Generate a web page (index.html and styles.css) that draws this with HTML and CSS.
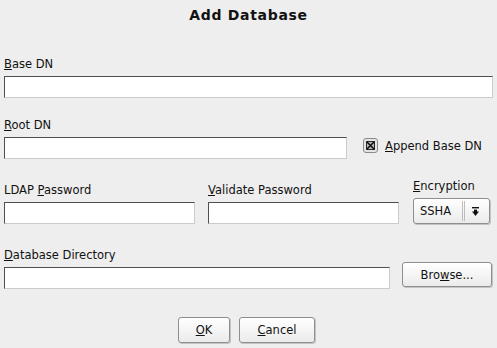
FILE: index.html
```html
<!DOCTYPE html>
<html lang="en">
<head>
    <meta charset="UTF-8">
    <title>Add Database</title>
    <link rel="stylesheet" href="styles.css">
</head>
<body>
<div class="dialog">
    <h1 class="title">Add Database</h1>

    <div class="row">
        <div class="field grow">
            <label><u>B</u>ase DN</label>
            <div class="entry"></div>
        </div>
    </div>

    <div class="row row-root">
        <div class="field root">
            <label><u>R</u>oot DN</label>
            <div class="entry"></div>
        </div>
        <div class="check">
            <svg class="box" width="15" height="15" viewBox="0 0 15 15">
                <rect x="0.5" y="0.5" width="14" height="14" rx="2.5" fill="#e4e4e4" stroke="#8a8a8a"/>
                <rect x="3.5" y="3.5" width="8" height="8" fill="#b8b8b8" stroke="#2a2a2a"/>
                <path d="M4 4 L11 11 M11 4 L4 11" stroke="#111" stroke-width="1.6"/>
            </svg>
            <span><u>A</u>ppend Base DN</span>
        </div>
    </div>

    <div class="row row-pass">
        <div class="field pass">
            <label>LDAP <u>P</u>assword</label>
            <div class="entry"></div>
        </div>
        <div class="field pass">
            <label><u>V</u>alidate Password</label>
            <div class="entry"></div>
        </div>
        <div class="field enc">
            <label><u>E</u>ncryption</label>
            <div class="btn combo">
                <span class="combo-text">SSHA</span>
                <span class="sep"></span>
                <svg class="arrow" width="7" height="9" viewBox="0 0 7 9">
                    <rect x="0" y="0" width="7" height="1.4" fill="#111"/>
                    <rect x="2" y="2.6" width="3" height="2.6" fill="#111"/>
                    <path d="M0 4.6 L7 4.6 L3.5 9 Z" fill="#111"/>
                </svg>
            </div>
        </div>
    </div>

    <div class="row row-dir">
        <div class="field dir">
            <label><u>D</u>atabase Directory</label>
            <div class="entry"></div>
        </div>
        <div class="btn browse">Bro<u>w</u>se...</div>
    </div>

    <div class="actions">
        <div class="btn ok"><u>O</u>K</div>
        <div class="btn cancel"><u>C</u>ancel</div>
    </div>
</div>
</body>
</html>
```
FILE: styles.css
```css
html, body {
    margin: 0;
    padding: 0;
    height: 100%;
}

body {
    background: #eeeeee;
    color: #111;
    font-family: "DejaVu Sans", sans-serif;
    font-size: 11.5px;
}

.dialog {
    padding: 0 4px;
}

.title {
    margin: 0;
    padding-top: 7px;
    height: 17px;
    line-height: 17px;
    text-align: center;
    font-size: 14px;
    font-weight: bold;
    letter-spacing: 0.7px;
}

.row {
    display: flex;
    align-items: flex-end;
    margin-top: 33px;
}

.field {
    display: flex;
    flex-direction: column;
}

.field label {
    line-height: 14px;
    height: 14px;
    margin-bottom: 5px;
}

.grow {
    flex: 1;
}

.entry {
    height: 20px;
    background: #fff;
    border-top: 1px solid #4f4f4f;
    border-left: 1px solid #4f4f4f;
    border-right: 1px solid #cbcbcb;
    border-bottom: 1px solid #cbcbcb;
}

.row-root {
    margin-top: 20px;
}

.root {
    width: 343px;
}

.check {
    display: flex;
    align-items: center;
    margin-left: 16px;
    margin-bottom: 6px;
}

.check .box {
    margin-right: 7px;
}

.row-pass {
    margin-top: 20px;
}

.pass {
    width: 191px;
    margin-right: 13px;
}

.pass + .pass {
    margin-right: 14px;
}

.btn {
    box-sizing: border-box;
    border: 1px solid #8e8e8e;
    border-radius: 3px;
    background: linear-gradient(#ffffff, #ebebeb);
    box-shadow: 1px 1px 0 #c4c4c4;
    display: flex;
    align-items: center;
    justify-content: center;
}

.combo {
    width: 77px;
    height: 26px;
    justify-content: flex-start;
    padding-left: 6px;
}

.combo-text {
    width: 42px;
}

.sep {
    width: 1px;
    height: 20px;
    border-left: 1px solid #bdbdbd;
    border-right: 1px solid #bdbdbd;
    margin-right: 7px;
}

.row-dir {
    margin-top: 24px;
}

.dir {
    width: 386px;
}

.browse {
    width: 90px;
    height: 25px;
    margin-left: 12px;
    margin-bottom: 2px;
}

.actions {
    display: flex;
    justify-content: center;
    margin-top: 28px;
    padding-right: 4px;
}

.ok {
    width: 52px;
    height: 26px;
}

.cancel {
    width: 76px;
    height: 26px;
    margin-left: 9px;
}
```
